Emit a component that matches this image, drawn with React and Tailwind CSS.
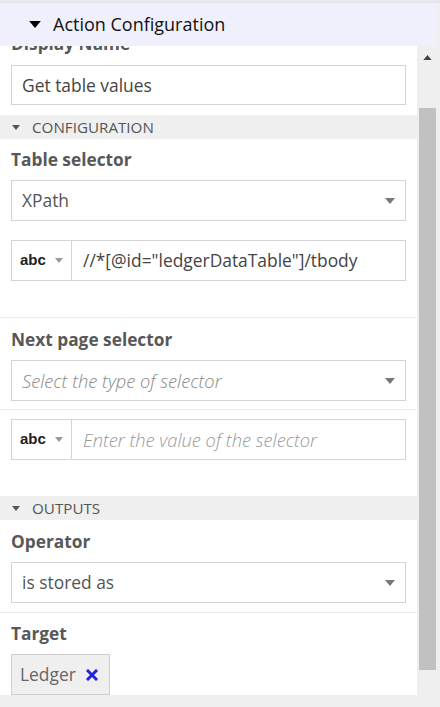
const Caret = ({ className = "" }) => (
  <svg viewBox="0 0 10 6" className={className}>
    <path d="M0 0h10L5 6z" fill="currentColor" />
  </svg>
);

const Label = ({ children, className = "" }) => (
  <div className={`text-[17.3px] font-bold text-[#585858] leading-[24px] ${className}`}>{children}</div>
);

const Select = ({ value, placeholder }) => (
  <div className="h-[41px] border border-[#d4d4d4] bg-white flex items-center justify-between pl-[10px] pr-[10px]">
    {value ? (
      <span className="text-[17.4px] text-[#555]">{value}</span>
    ) : (
      <span className="text-[18.3px] italic font-light text-[#888]">{placeholder}</span>
    )}
    <Caret className="w-[10px] h-[6px] text-[#777]" />
  </div>
);

const ValueInput = ({ value, placeholder }) => (
  <div className="h-[41px] border border-[#d4d4d4] bg-white flex">
    <div className="w-[60px] border-r border-[#d4d4d4] flex items-center pl-[8px] gap-[9px]">
      <span className="font-['Liberation_Sans'] font-bold text-[15px] text-[#222]">abc</span>
      <Caret className="w-[8px] h-[5px] text-[#999]" />
    </div>
    <div className="flex-1 flex items-center pl-[11px]">
      {value ? (
        <span className="text-[17.4px] text-[#444]">{value}</span>
      ) : (
        <span className="text-[18.3px] italic font-light text-[#999]">{placeholder}</span>
      )}
    </div>
  </div>
);

const Section = ({ title }) => (
  <div className="h-[24px] bg-[#efefef] flex items-center pl-[12px] gap-[12px]">
    <Caret className="w-[8px] h-[5px] text-[#555]" />
    <span className="text-[15.2px] text-[#555] uppercase">{title}</span>
  </div>
);

export default function App() {
  return (
    <div className="w-[440px] h-[707px] bg-[#efefef] flex flex-col overflow-hidden font-['Open_Sans',sans-serif]">
      <div className="h-[3px] bg-[#e6e7ec]" />
      {/* panel header */}
      <div className="h-[43px] shrink-0 mr-[3px] bg-[#eff0fc] flex items-center pl-[29px] gap-[12px]">
        <Caret className="w-[12px] h-[7px] text-black" />
        <span className="text-[18px] text-[#111]">Action Configuration</span>
      </div>

      <div className="flex h-[649px] mr-[3px]">
        {/* scrolled form body */}
        <div className="w-[417px] bg-white overflow-hidden">
          <div className="px-[11px] pb-[10px]">
            <Label className="-mt-[14px]">Display Name</Label>
            <div className="mt-[9px] h-[40px] border border-[#d4d4d4] flex items-center pl-[10px]">
              <span className="text-[17.4px] text-[#444]">Get table values</span>
            </div>
          </div>

          <Section title="Configuration" />
          <div className="px-[11px] pt-[9px] pb-[36px] border-b border-[#ececec]">
            <Label>Table selector</Label>
            <div className="mt-[8px]">
              <Select value="XPath" />
            </div>
            <div className="mt-[19px]">
              <ValueInput value={'//*[@id="ledgerDataTable"]/tbody'} />
            </div>
          </div>

          <div className="px-[11px] pt-[10px] pb-[8px] border-b border-[#ececec]">
            <Label>Next page selector</Label>
            <div className="mt-[8px]">
              <Select placeholder="Select the type of selector" />
            </div>
          </div>
          <div className="px-[11px] pt-[9px] pb-[36px]">
            <ValueInput placeholder="Enter the value of the selector" />
          </div>

          <Section title="Outputs" />
          <div className="px-[11px] pt-[10px] pb-[9px] border-b border-[#ececec]">
            <Label>Operator</Label>
            <div className="mt-[8px]">
              <Select value="is stored as" />
            </div>
          </div>
          <div className="px-[11px] pt-[9px]">
            <Label>Target</Label>
            <div className="mt-[8px] inline-flex items-center h-[41px] border border-[#cfcfcf] bg-[#efefef] pl-[8px] pr-[11px] gap-[10px]">
              <span className="text-[17.4px] text-[#666]">Ledger</span>
              <svg viewBox="0 0 12 12" className="w-[12px] h-[12px]">
                <path d="M2 2l8 8M10 2l-8 8" stroke="#2323d6" strokeWidth="3" strokeLinecap="square" />
              </svg>
            </div>
          </div>
        </div>

        {/* scrollbar */}
        <div className="w-[20px] bg-[#efefef] flex flex-col items-center">
          <Caret className="mt-[9px] w-[9px] h-[5px] text-[#444] rotate-180" />
          <div className="mt-[48px] w-[17px] h-[562px] bg-[#c1c1c1]" />
        </div>
      </div>
    </div>
  );
}
